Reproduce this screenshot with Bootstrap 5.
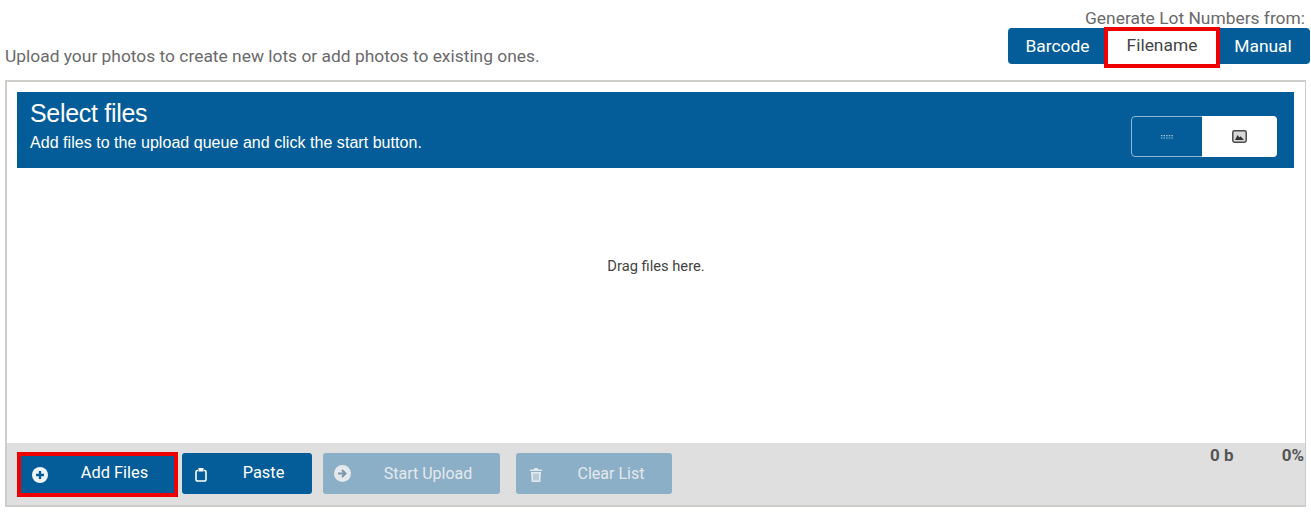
<!DOCTYPE html>
<html lang="en">
<head>
<meta charset="utf-8">
<title>Upload</title>
<link href="https://cdn.jsdelivr.net/npm/bootstrap@5.3.0/dist/css/bootstrap.min.css" rel="stylesheet">
<style>
html,body{height:514px;overflow:hidden;background:#fff}
body{font-family:Roboto,"Liberation Sans",sans-serif;color:#666;padding:0 1px 0 5px}
.top-band{height:80px}
.intro{font-size:17.4px;line-height:20px;margin-bottom:14px;color:#6a6a6a}
.lot-side{width:302px;padding-top:9px}
.lot-label{font-size:17.4px;line-height:19px;padding-right:5px;color:#6a6a6a;text-align:right;white-space:nowrap}
.lot-group{height:36px;background:#045d99;border-radius:4px;font-size:17.4px}
.lot-item{color:#fff;display:flex;align-items:center;justify-content:center;position:relative}
.lot-a{width:96px;padding-left:3px}
.lot-b{width:116px;margin-top:-1px;height:41px;background:#fff;color:#444;border:4px solid #ee0000;flex:none;padding-bottom:4px}
.lot-c{flex:1;padding-right:4px}
.up-box{width:1301px;height:427px;border:2px solid #cfcdca;border-right-width:1px}
.up-head{margin:10px 11px 0 10px;height:76px;background:#045d99;color:#fff;padding:6px 17px 0 13px;font-family:"Liberation Sans",Arial,sans-serif}
.up-title{font-size:25px;line-height:30px;letter-spacing:-.3px}
.up-sub{font-size:16px;line-height:20px;margin-top:5px;letter-spacing:.04px}
.view-sw{width:146px;height:41px;margin-top:18px;border:1px solid #8fb8d3;border-radius:4px}
.view-l{width:70px}
.view-r{background:#fff;border-radius:0 4px 4px 0;margin:-1px -1px -1px 0}
.drop-area{height:275px;font-size:14.7px;color:#444;padding-bottom:78px}
.up-foot{height:62px;background:#dfdfdf;padding:10px 1px 0 11px}
.act{height:41px;border-radius:3px;background:#045d99;color:#fff;font-size:16.4px;display:flex;align-items:center;flex:none;position:relative}
.act svg{flex:none}
.act span{flex:1;text-align:center}
.act-add{width:153px;margin:3px 8px 0 3px;outline:4px solid #ee0000;height:37px;border-radius:0}
.act-add svg{margin-left:11px}
.act-add span{padding:0 0 2px 7px}
.act-paste{width:130px;margin-right:11px}
.act-paste svg{margin:2px 0 0 13px}
.act-paste span{padding-left:8px}
.off{background:#8cafc8;color:#e4e9ed;font-size:16px}
.act-start{width:177px;margin-right:16px}
.act-start svg{margin-left:11px}
.act-start span{padding-left:5px}
.act-clear{width:156px}
.act-clear svg{margin:3px 0 0 14px}
.act-clear span{padding-left:8px}
.stat-box{font-weight:700;font-size:17px;line-height:20px;color:#555;margin-top:-8px}
.stat-a{width:72px;text-align:left}
.stat-b{width:22px;white-space:nowrap;display:flex;justify-content:flex-end}
</style>
</head>
<body>
<div class="d-flex justify-content-between align-items-end top-band">
  <div class="intro">Upload your photos to create new lots or add photos to existing ones.</div>
  <div class="lot-side align-self-start">
    <div class="lot-label">Generate Lot Numbers from:</div>
    <div class="d-flex lot-group">
      <div class="lot-item lot-a">Barcode</div>
      <div class="lot-item lot-b">Filename</div>
      <div class="lot-item lot-c">Manual</div>
    </div>
  </div>
</div>
<div class="up-box d-flex flex-column">
  <div class="up-head d-flex justify-content-between">
    <div>
      <div class="up-title">Select files</div>
      <div class="up-sub">Add files to the upload queue and click the start button.</div>
    </div>
    <div class="view-sw d-flex">
      <div class="view-l d-flex align-items-center justify-content-center">
        <svg width="14" height="6" viewBox="0 0 14 6" fill="#a9cbe2"><path d="M1 1h1.4v1.200H1zM3.600 1H5v1.200H3.600zM6.200 1h1.400v1.200H6.200zM8.800 1h1.400v1.200H8.800zM11.400 1h1.400v1.200h-1.400zM1 3.400h1.400v1.200H1zM3.600 3.400H5v1.200H3.600zM6.200 3.400h1.400v1.200H6.200zM8.800 3.400h1.400v1.200H8.800zM11.400 3.400h1.400v1.200h-1.400z"/></svg>
      </div>
      <div class="view-r flex-grow-1 d-flex align-items-center justify-content-center">
        <svg width="15" height="13" viewBox="0 0 15 13"><rect x=".8" y=".8" width="13.4" height="11.4" rx="1.600" fill="#d8d8d8" stroke="#4a4a4a" stroke-width="1.500"/><path d="M3 10l2.600-5 1.800 2.400 1.200-1.200L12 10z" fill="#333"/></svg>
      </div>
    </div>
  </div>
  <div class="drop-area d-flex align-items-center justify-content-center">Drag files here.</div>
  <div class="up-foot d-flex flex-grow-1 align-items-start">
    <div class="act act-add">
      <svg width="16" height="16" viewBox="0 0 16 16"><circle cx="8" cy="8" r="8" fill="#eef3f6"/><path d="M8 4v8M4 8h8" stroke="#045d99" stroke-width="2.400"/></svg>
      <span>Add Files</span>
    </div>
    <div class="act act-paste">
      <svg width="12" height="15" viewBox="0 0 12 15" fill="none"><path d="M3 3.500H2.500A1.500 1.500 0 0 0 1 5v7.500A1.500 1.500 0 0 0 2.500 14h7a1.500 1.500 0 0 0 1.500-1.500V5a1.500 1.500 0 0 0-1.500-1.500H9" stroke="#fff" stroke-width="1.600"/><path d="M3.500 1h5v3.500h-5z" fill="#fff"/></svg>
      <span>Paste</span>
    </div>
    <div class="act off act-start">
      <svg width="17" height="17" viewBox="0 0 17 17"><circle cx="8.500" cy="8.500" r="8.500" fill="#e4e9ed"/><path d="M4 8.500h7M8 5l3.500 3.500L8 12" stroke="#7d97aa" stroke-width="2" fill="none"/></svg>
      <span>Start Upload</span>
    </div>
    <div class="act off act-clear">
      <svg width="12" height="14" viewBox="0 0 12 14" fill="#e4e9ed"><path d="M4.500 0h3l.5 1.500h4V3H0V1.500h4zM1 4h10l-.7 10H1.700zM3.500 5.500v7h1v-7zM5.500 5.500v7h1v-7zM7.500 5.500v7h1v-7z"/></svg>
      <span>Clear List</span>
    </div>
    <div class="stat-box d-flex ms-auto">
      <div class="stat-a">0 b</div>
      <div class="stat-b">0%</div>
    </div>
  </div>
</div>
<script src="https://cdn.jsdelivr.net/npm/bootstrap@5.3.0/dist/js/bootstrap.bundle.min.js"></script>
</body>
</html>
